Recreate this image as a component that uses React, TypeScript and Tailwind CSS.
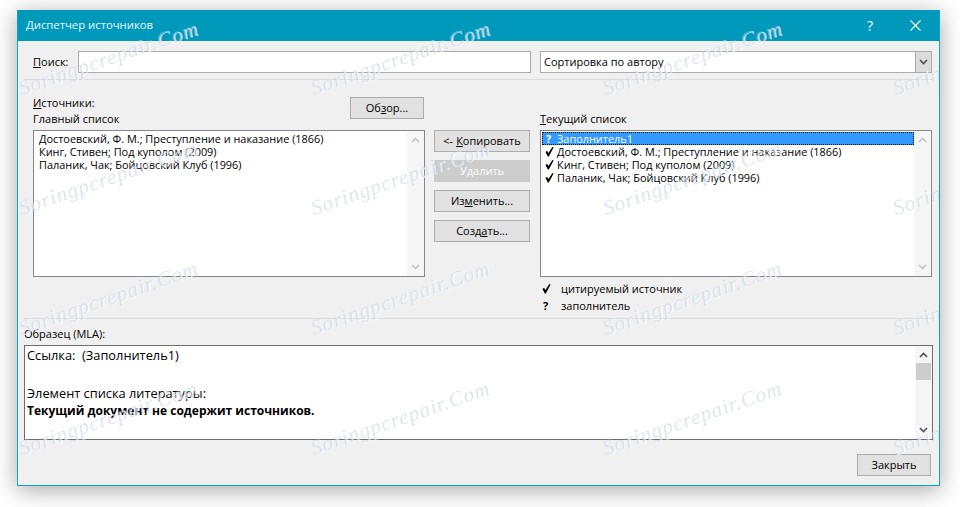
const font = "[font-family:'Open_Sans','Noto_Sans',sans-serif]";

const mainList = [
  "Достоевский, Ф. М.; Преступление и наказание (1866)",
  "Кинг, Стивен; Под куполом (2009)",
  "Паланик, Чак; Бойцовский Клуб (1996)",
];

const marks = [
  { x: 22, y: 68 },
  { x: 314, y: 68 },
  { x: 606, y: 68 },
  { x: 896, y: 68 },
  { x: 22, y: 188 },
  { x: 314, y: 188 },
  { x: 606, y: 188 },
  { x: 896, y: 188 },
  { x: 22, y: 308 },
  { x: 314, y: 308 },
  { x: 606, y: 308 },
  { x: 896, y: 308 },
  { x: 22, y: 428 },
  { x: 314, y: 428 },
  { x: 606, y: 428 },
  { x: 896, y: 428 },
];

function Chevron({ up, dark }: { up?: boolean; dark?: boolean }) {
  return (
    <svg width="9" height="6" viewBox="0 0 9 6" fill="none">
      <path
        d={up ? "M1 5 4.5 1.5 8 5" : "M1 1 4.5 4.5 8 1"}
        stroke={dark ? "#505050" : "#c4c4c4"}
        strokeWidth="1.6"
      />
    </svg>
  );
}

function Check() {
  return (
    <svg width="9" height="10" viewBox="0 0 9 10" className="shrink-0">
      <path d="M0.5 5 2 3.8 3.4 6 7.4 0 8.6 0.6 3.8 9.5H2.8Z" fill="#000" />
    </svg>
  );
}

function Button({
  children,
  className = "",
  disabled,
}: {
  children: React.ReactNode;
  className?: string;
  disabled?: boolean;
}) {
  return (
    <div
      className={`flex h-[22px] items-center justify-center border text-[11px] ${
        disabled
          ? "border-[#cccccc] bg-[#cccccc] text-white"
          : "border-[#adadad] bg-[#e1e1e1] text-black"
      } ${className}`}
    >
      {children}
    </div>
  );
}

function ScrollTrack({ dark }: { dark?: boolean }) {
  return (
    <div className="flex w-[17px] shrink-0 flex-col items-center justify-between bg-[#f0f0f0]/60 py-[6px]">
      <Chevron up dark={dark} />
      <Chevron dark={dark} />
    </div>
  );
}

export default function App() {
  return (
    <div className={`h-[507px] w-[960px] overflow-hidden bg-white pl-[17px] pt-[10px] ${font}`}>
      <div className="relative flex h-[476px] w-[923px] flex-col overflow-hidden border border-t-0 border-[#0fa3c4] bg-[#f0f0f0] shadow-[0_4px_22px_rgba(0,0,0,0.35)]">
        {/* Title bar */}
        <div className="flex h-[31px] shrink-0 items-center justify-between bg-[#0099bc] pl-[8px] pr-[18px] text-[#e8f6fa]">
          <span className="text-[11.3px]">Диспетчер источников</span>
          <div className="flex items-center gap-[37px]">
            <span className="text-sm text-white">?</span>
            <svg width="11" height="11" viewBox="0 0 11 11" fill="none">
              <path d="M0.5 0.5 10.5 10.5M10.5 0.5 0.5 10.5" stroke="#fff" strokeWidth="1.1" />
            </svg>
          </div>
        </div>

        {/* Search row */}
        <div className="mt-[10px] flex h-[22px] items-center pl-[15px] pr-[6px] text-[11px] text-black">
          <span className="w-[45px]">
            <u>П</u>оиск:
          </span>
          <div className="h-full w-[453px] border border-[#ababab] bg-white" />
          <div className="ml-[9px] flex h-full w-[392px] items-center border border-[#ababab] bg-white pl-[3px]">
            <span className="flex-1">Сортировка по автору</span>
            <div className="flex h-full w-[16px] items-center justify-center border-l border-[#ababab] bg-[#dcdcdc]">
              <Chevron dark />
            </div>
          </div>
        </div>

        <div className="mx-[6px] mt-[6px] h-px bg-[#dadada]" />

        {/* Lists */}
        <div className="mt-[17px] flex pl-[15px] pr-[6px] text-[11px] text-black">
          <div className="w-[392px]">
            <div className="flex h-[33px] justify-between">
              <div className="-mt-[2px] flex flex-col leading-[16px]">
                <span>
                  <u>И</u>сточники:
                </span>
                <span>Главный список</span>
              </div>
              <Button className="mr-px w-[74px]">
                Об<u>з</u>ор...
              </Button>
            </div>
            <div className="flex h-[147px] border border-[#828790] bg-white">
              <div className="flex-1 pl-[5px] pt-px text-[10.9px] leading-[13px]">
                {mainList.map((s) => (
                  <div key={s}>{s}</div>
                ))}
              </div>
              <ScrollTrack />
            </div>
          </div>

          <div className="ml-[9px] flex w-[96px] flex-col gap-[8px] pt-[33px]">
            <Button>
              &lt;- <u className="ml-[3px]">К</u>опировать
            </Button>
            <Button disabled>Удалить</Button>
            <Button>
              Из<u>м</u>енить...
            </Button>
            <Button>
              Созд<u>а</u>ть...
            </Button>
          </div>

          <div className="ml-[10px] w-[392px]">
            <div className="flex h-[33px] items-start pt-[14px] leading-[16px]">
              <span>
                <u>Т</u>екущий список
              </span>
            </div>
            <div className="flex h-[147px] border border-[#828790] bg-white">
              <div className="flex-1 pl-[1px] pt-[1px] text-[10.9px] leading-[13px]">
                <div className="flex h-[13px] items-center border border-dotted border-black bg-[#3399ff] pl-[3px] text-white">
                  <span className="w-[11px] font-bold">?</span>
                  <span>Заполнитель1</span>
                </div>
                {mainList.map((s) => (
                  <div key={s} className="flex items-center pl-[3px]">
                    <Check />
                    <span className="ml-[3px]">{s}</span>
                  </div>
                ))}
              </div>
              <ScrollTrack />
            </div>
            <div className="mt-[4px] flex h-[16px] items-center pl-[2px]">
              <Check />
              <span className="ml-[10px]">цитируемый источник</span>
            </div>
            <div className="mt-px flex h-[16px] items-center pl-[3px]">
              <span className="w-[18px] font-bold">?</span>
              <span>заполнитель</span>
            </div>
          </div>
        </div>

        <div className="mx-[6px] mt-[4px] h-px bg-[#dadada]" />

        {/* Preview */}
        <div className="mx-[6px] mt-[8px] text-[11px] leading-[14px] text-black">Образец (MLA):</div>
        <div className="mx-[6px] mt-[4px] flex h-[95px] border border-[#6d6d6d] bg-white text-black">
          <div className="flex-1 pl-[2px] leading-[19px]">
            <div className="text-[12.8px]">Ссылка:&nbsp; (Заполнитель1)</div>
            <div className="h-[19px]" />
            <div className="text-[12.8px]">Элемент списка литературы:</div>
            <div className="text-xs font-bold">Текущий документ не содержит источников.</div>
          </div>
          <div className="flex w-[17px] flex-col items-center bg-[#f0f0f0]/60">
            <div className="flex h-[17px] items-center">
              <Chevron up dark />
            </div>
            <div className="h-[17px] w-[15px] bg-[#cdcdcd]" />
            <div className="flex flex-1 items-end pb-[6px]">
              <Chevron dark />
            </div>
          </div>
        </div>

        <div className="mr-[8px] mt-[14px] flex justify-end">
          <Button className="w-[74px]">Закрыть</Button>
        </div>

        {/* Watermark */}
        <div className="pointer-events-none absolute inset-0 [font-family:'Liberation_Serif',serif]">
          {marks.map((m) => (
            <span
              key={`${m.x}-${m.y}`}
              className="absolute origin-bottom-left -rotate-[19deg] whitespace-nowrap text-[21px] italic leading-none tracking-[1px] text-[#c5d0e4]/55 [text-shadow:1px_1px_0_rgba(255,255,255,0.7)]"
              style={{ left: m.x - 17, top: m.y }}
            >
              Soringpcrepair.Com
            </span>
          ))}
        </div>
      </div>
    </div>
  );
}
